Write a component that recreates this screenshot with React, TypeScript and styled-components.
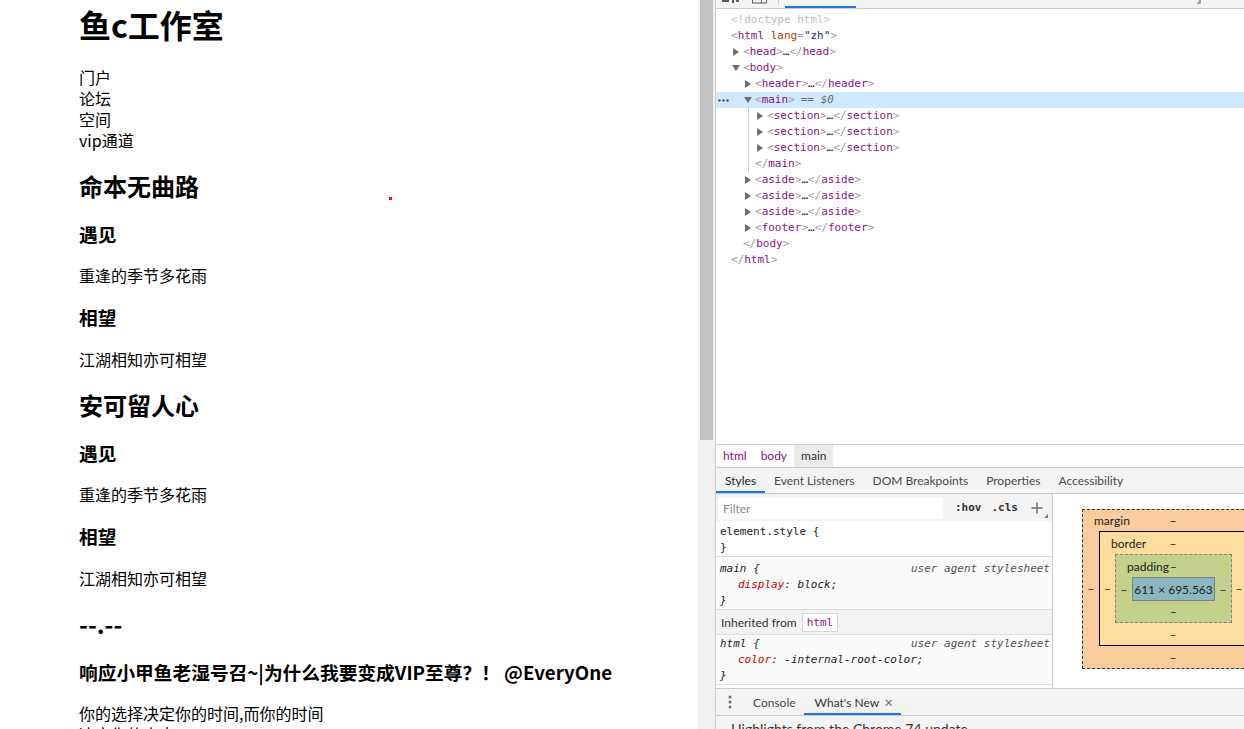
import React from "react";
import styled, { createGlobalStyle, css } from "styled-components";

const CJK = `"Noto Sans CJK SC", "Microsoft YaHei", sans-serif`;
const UI = `Lato, "Noto Sans", sans-serif`;
const MONO = `"DejaVu Sans Mono", "Liberation Mono", monospace`;

const GlobalStyle = createGlobalStyle`
  html, body { margin: 0; padding: 0; background: #fff; overflow: hidden; }
  #root { width: 1244px; height: 729px; }
`;

const Screen = styled.div`
  display: grid;
  grid-template-columns: 698px 17px 529px;
  height: 729px;
  overflow: hidden;
`;

/* ---------- left page ---------- */
const Page = styled.div`
  position: relative;
  overflow: hidden;
  padding-left: 79px;
  font-family: ${CJK};
  color: #000;
`;
const Title = styled.h1`
  font-size: 32px;
  font-weight: 700;
  line-height: 42px;
  margin: 3px 0 22.44px;
`;
const Nav = styled.nav`
  display: flex;
  flex-direction: column;
  margin-bottom: -1px;
`;
const NavLink = styled.span`
  font-size: 16px;
  line-height: 21px;
`;
const SectionTitle = styled.h2`
  font-size: 24px;
  font-weight: 700;
  line-height: 31.68px;
  margin: 19.92px 0;
`;
const SubTitle = styled.h3`
  font-size: 18.72px;
  font-weight: 700;
  line-height: 24.71px;
  margin: 18.72px 0;
  white-space: nowrap;
`;
const Para = styled.p`
  font-size: 16px;
  line-height: 21px;
  margin: 16px 0;
`;
const CursorDot = styled.span`
  position: absolute;
  left: 389px;
  top: 197px;
  width: 3px;
  height: 3px;
  background: #f01414;
`;

/* ---------- scrollbar ---------- */
const ScrollTrack = styled.div`
  background: #f1f1f1;
  padding: 0 2px;
`;
const ScrollThumb = styled.div`
  height: 440px;
  background: #c1c1c1;
`;

/* ---------- devtools ---------- */
const DevTools = styled.div`
  border-left: 1px solid #ccc;
  display: flex;
  flex-direction: column;
  height: 729px;
  overflow: hidden;
  background: #fff;
`;
const TopBar = styled.div`
  flex: none;
  height: 8px;
  background: #f3f3f3;
  border-bottom: 1px solid #ccc;
  display: flex;
  align-items: flex-start;
  padding-left: 6px;
  overflow: hidden;
`;
const TopStub = styled.svg<{ $gap: number }>`
  flex: none;
  margin-right: ${(p) => p.$gap}px;
`;
const TopSep = styled.span`
  flex: none;
  width: 1px;
  height: 5px;
  background: #ccc;
  margin-right: 6px;
`;
const TopActiveTab = styled.span`
  flex: none;
  width: 71px;
  height: 8px;
  box-shadow: inset 0 -2px 0 #1a73e8;
`;
const TopSpacer = styled.span`
  flex: 1;
`;

const Tree = styled.div`
  flex: none;
  height: 435px;
  padding-top: 3px;
  box-sizing: border-box;
  font: 11px ${MONO};
  overflow: hidden;
`;
const Row = styled.div<{ $level: number; $selected?: boolean; $guide?: boolean }>`
  position: relative;
  height: 16px;
  line-height: 16px;
  display: flex;
  align-items: center;
  white-space: nowrap;
  padding-left: ${(p) => 6 + p.$level * 12}px;
  background-color: ${(p) => (p.$selected ? "#cfe8fc" : "transparent")};
  ${(p) =>
    p.$guide &&
    css`
      background-image: linear-gradient(#c6d2e6, #c6d2e6);
      background-repeat: no-repeat;
      background-size: 1px 100%;
      background-position: 32px 0;
    `}
`;
const Arrow = styled.span<{ $dir?: "right" | "down" }>`
  flex: none;
  width: 9px;
  height: 16px;
  display: flex;
  align-items: center;
  &::before {
    content: "";
    ${(p) =>
      p.$dir === "right" &&
      css`
        margin-left: -1px;
        border-left: 6px solid #6e6e6e;
        border-top: 4px solid transparent;
        border-bottom: 4px solid transparent;
      `}
    ${(p) =>
      p.$dir === "down" &&
      css`
        margin-left: -2px;
        border-top: 6px solid #6e6e6e;
        border-left: 4px solid transparent;
        border-right: 4px solid transparent;
      `}
  }
`;
const SelDots = styled.svg`
  position: absolute;
  left: 2px;
  top: 7px;
`;
const Br = styled.span`
  color: #a894a6;
`;
const TagName = styled.span`
  color: #881280;
`;
const AttrName = styled.span`
  color: #994500;
`;
const AttrValue = styled.span`
  color: #1a1aa6;
`;
const Plain = styled.span`
  color: #222;
`;
const Doctype = styled.span`
  color: #c0c0c0;
`;
const DollarNote = styled.span`
  color: #6d6d6d;
  margin-left: 6px;
  & > i {
    font-style: italic;
  }
`;

const Crumbs = styled.div`
  flex: none;
  height: 22px;
  border-top: 1px solid #ccc;
  border-bottom: 1px solid #ccc;
  display: flex;
  font: 12px ${UI};
`;
const Crumb = styled.span<{ $active?: boolean }>`
  padding: 0 7px;
  line-height: 22px;
  color: ${(p) => (p.$active ? "#333" : "#881280")};
  background: ${(p) => (p.$active ? "#eaeaea" : "transparent")};
`;

const TabBar = styled.div`
  flex: none;
  height: 25px;
  background: #f3f3f3;
  border-bottom: 1px solid #ccc;
  display: flex;
  font: 12px ${UI};
`;
const Tab = styled.div<{ $active?: boolean }>`
  padding: 0 9px;
  line-height: 26px;
  color: ${(p) => (p.$active ? "#222" : "#4a4a4a")};
  box-shadow: ${(p) => (p.$active ? "inset 0 -2px 0 #1a73e8" : "none")};
  white-space: nowrap;
`;

const Panes = styled.div`
  flex: none;
  height: 194px;
  display: flex;
  overflow: hidden;
`;
const StylesPane = styled.div`
  flex: none;
  width: 336px;
  border-right: 1px solid #ccc;
  display: flex;
  flex-direction: column;
  overflow: hidden;
`;
const FilterBar = styled.div`
  flex: none;
  height: 27px;
  background: #f3f3f3;
  display: flex;
  align-items: center;
  padding-left: 2px;
  position: relative;
`;
const FilterInput = styled.div`
  flex: none;
  width: 220px;
  height: 21px;
  margin-top: 2px;
  background: #fff;
  padding-left: 5px;
  font: 12px ${UI};
  line-height: 21px;
  color: #8a8a8a;
`;
const Toggle = styled.span<{ $gap: number }>`
  margin-left: ${(p) => p.$gap}px;
  font: bold 11px ${MONO};
  color: #333;
`;
const PlusIcon = styled.svg`
  margin-left: 13px;
`;
const ResizeCorner = styled.span`
  position: absolute;
  right: 4px;
  bottom: 3px;
  border-left: 4px solid transparent;
  border-bottom: 4px solid #777;
`;
const Rule = styled.div<{ $ua?: boolean; $top: number }>`
  flex: none;
  padding: ${(p) => p.$top}px 2px 0 4px;
  border-bottom: 1px solid #ddd;
  background: ${(p) => (p.$ua ? "#fafafa" : "#fff")};
  font: 11px ${MONO};
  line-height: 16px;
  color: #222;
  font-style: ${(p) => (p.$ua ? "italic" : "normal")};
`;
const RuleHead = styled.div`
  display: flex;
  justify-content: space-between;
  white-space: nowrap;
`;
const Origin = styled.span`
  color: #545454;
`;
const Decl = styled.div`
  padding-left: 18px;
  white-space: nowrap;
`;
const PropName = styled.span`
  color: #c80000;
`;
const InheritedBar = styled.div`
  flex: none;
  height: 24px;
  background: #f3f3f3;
  border-bottom: 1px solid #ddd;
  display: flex;
  align-items: center;
  padding-left: 5px;
  font: 12px ${UI};
  color: #333;
`;
const InheritChip = styled.span`
  margin-left: 5px;
  padding: 0 4px;
  height: 17px;
  border: 1px solid #d6d6d6;
  background: #fff;
  font: 11px ${MONO};
  line-height: 17px;
  color: #881280;
`;

const BoxPane = styled.div`
  flex: 1;
  overflow: hidden;
  padding: 15px 0 0 29px;
  background: #fff;
  font: 12px ${UI};
  color: #222;
  display: flex;
  align-items: flex-start;
`;
const Layer = styled.div<{ $bg: string; $border: string; $cols: string; $rows: string }>`
  flex: none;
  display: grid;
  grid-template-columns: ${(p) => p.$cols};
  grid-template-rows: ${(p) => p.$rows};
  background: ${(p) => p.$bg};
  border: ${(p) => p.$border};
`;
const LayerTop = styled.div`
  grid-column: 1 / -1;
  display: grid;
  grid-template-columns: minmax(0, 1fr) auto minmax(0, 1fr);
  align-items: center;
  white-space: nowrap;
`;
const LayerLabel = styled.span`
  padding-left: 11px;
`;
const Dash = styled.span`
  display: flex;
  align-items: center;
  justify-content: center;
`;
const LayerBottom = styled(Dash)`
  grid-column: 1 / -1;
`;
const ContentBox = styled.div`
  background: #8cb6c0;
  border: 1px solid #808080;
  display: flex;
  align-items: center;
  justify-content: center;
  white-space: nowrap;
`;

const Drawer = styled.div`
  flex: none;
  border-top: 1px solid #ccc;
  background: #f3f3f3;
`;
const DrawerTabs = styled.div`
  height: 26px;
  border-bottom: 1px solid #ccc;
  display: flex;
  font: 12px ${UI};
`;
const MenuButton = styled.span`
  width: 27px;
  display: flex;
  align-items: center;
  justify-content: center;
`;
const DrawerTab = styled.span<{ $active?: boolean }>`
  display: flex;
  align-items: center;
  height: 26px;
  padding: 0 8px 0 ${(p) => (p.$active ? 11 : 10)}px;
  color: ${(p) => (p.$active ? "#333" : "#4a4a4a")};
  box-shadow: ${(p) => (p.$active ? "inset 0 -2px 0 #1a73e8" : "none")};
  white-space: nowrap;
`;
const CloseX = styled.span`
  margin-left: 5px;
  font-size: 15px;
  line-height: 1;
  color: #6e6e6e;
`;
const DrawerBody = styled.div`
  padding: 4px 15px 0;
  font: 14px ${UI};
  line-height: 18px;
  color: #333;
  white-space: nowrap;
`;

/* ---------- helpers ---------- */
const Open = ({ name }: { name: string }) => (
  <>
    <Br>&lt;</Br>
    <TagName>{name}</TagName>
    <Br>&gt;</Br>
  </>
);
const Close = ({ name }: { name: string }) => (
  <>
    <Br>&lt;/</Br>
    <TagName>{name}</TagName>
    <Br>&gt;</Br>
  </>
);
const Collapsed = ({ name }: { name: string }) => (
  <>
    <Open name={name} />
    <Plain>…</Plain>
    <Close name={name} />
  </>
);

const Dots = () => (
  <svg width="4" height="14" viewBox="0 0 4 14">
    <circle cx="2" cy="2" r="1.5" fill="#6e6e6e" />
    <circle cx="2" cy="7" r="1.5" fill="#6e6e6e" />
    <circle cx="2" cy="12" r="1.5" fill="#6e6e6e" />
  </svg>
);

export default function App() {
  return (
    <>
      <GlobalStyle />
      <Screen>
        <Page>
          <header>
            <Title>鱼c工作室</Title>
            <Nav>
              <NavLink>门户</NavLink>
              <NavLink>论坛</NavLink>
              <NavLink>空间</NavLink>
              <NavLink>vip通道</NavLink>
            </Nav>
          </header>
          <main>
            <section>
              <SectionTitle>命本无曲路</SectionTitle>
              <SubTitle>遇见</SubTitle>
              <Para>重逢的季节多花雨</Para>
              <SubTitle>相望</SubTitle>
              <Para>江湖相知亦可相望</Para>
            </section>
            <section>
              <SectionTitle>安可留人心</SectionTitle>
              <SubTitle>遇见</SubTitle>
              <Para>重逢的季节多花雨</Para>
              <SubTitle>相望</SubTitle>
              <Para>江湖相知亦可相望</Para>
            </section>
            <section>
              <SectionTitle>--.--</SectionTitle>
              <SubTitle>响应小甲鱼老湿号召~|为什么我要变成VIP至尊？！ @EveryOne</SubTitle>
              <Para>
                你的选择决定你的时间,而你的时间
                <br />
                决定你的未来
              </Para>
            </section>
          </main>
          <CursorDot />
        </Page>

        <ScrollTrack>
          <ScrollThumb />
        </ScrollTrack>

        <DevTools>
          <TopBar>
            <TopStub $gap={12} width="18" height="4" viewBox="0 0 18 4">
              <rect x="0" y="0" width="7" height="2" fill="#5f5f5f" />
              <rect x="10" y="0" width="2" height="3" fill="#5f5f5f" />
              <rect x="14" y="0" width="3" height="2" fill="#5f5f5f" />
            </TopStub>
            <TopStub $gap={11} width="15" height="4" viewBox="0 0 15 4">
              <rect x="0.5" y="-2" width="14" height="5" fill="none" stroke="#5f5f5f" />
              <rect x="9" y="0" width="1" height="3" fill="#5f5f5f" />
            </TopStub>
            <TopSep />
            <TopActiveTab />
            <TopSpacer />
            <TopStub $gap={42} width="6" height="4" viewBox="0 0 6 4">
              <path d="M1 3 H4 V0" fill="none" stroke="#5f5f5f" strokeWidth="1.2" />
            </TopStub>
          </TopBar>

          <Tree>
            <Row $level={0}>
              <Arrow />
              <Doctype>&lt;!doctype html&gt;</Doctype>
            </Row>
            <Row $level={0}>
              <Arrow />
              <Br>&lt;</Br>
              <TagName>html</TagName>&nbsp;
              <AttrName>lang</AttrName>
              <Br>=</Br>
              <AttrValue>"zh"</AttrValue>
              <Br>&gt;</Br>
            </Row>
            <Row $level={1}>
              <Arrow $dir="right" />
              <Collapsed name="head" />
            </Row>
            <Row $level={1}>
              <Arrow $dir="down" />
              <Open name="body" />
            </Row>
            <Row $level={2}>
              <Arrow $dir="right" />
              <Collapsed name="header" />
            </Row>
            <Row $level={2} $selected>
              <SelDots width="11" height="3" viewBox="0 0 11 3">
                <circle cx="1.5" cy="1.5" r="1.2" fill="#555" />
                <circle cx="5.5" cy="1.5" r="1.2" fill="#555" />
                <circle cx="9.5" cy="1.5" r="1.2" fill="#555" />
              </SelDots>
              <Arrow $dir="down" />
              <Open name="main" />
              <DollarNote>
                == <i>$0</i>
              </DollarNote>
            </Row>
            <Row $level={3} $guide>
              <Arrow $dir="right" />
              <Collapsed name="section" />
            </Row>
            <Row $level={3} $guide>
              <Arrow $dir="right" />
              <Collapsed name="section" />
            </Row>
            <Row $level={3} $guide>
              <Arrow $dir="right" />
              <Collapsed name="section" />
            </Row>
            <Row $level={2} $guide>
              <Arrow />
              <Close name="main" />
            </Row>
            <Row $level={2}>
              <Arrow $dir="right" />
              <Collapsed name="aside" />
            </Row>
            <Row $level={2}>
              <Arrow $dir="right" />
              <Collapsed name="aside" />
            </Row>
            <Row $level={2}>
              <Arrow $dir="right" />
              <Collapsed name="aside" />
            </Row>
            <Row $level={2}>
              <Arrow $dir="right" />
              <Collapsed name="footer" />
            </Row>
            <Row $level={1}>
              <Arrow />
              <Close name="body" />
            </Row>
            <Row $level={0}>
              <Arrow />
              <Close name="html" />
            </Row>
          </Tree>

          <Crumbs>
            <Crumb>html</Crumb>
            <Crumb>body</Crumb>
            <Crumb $active>main</Crumb>
          </Crumbs>

          <TabBar>
            <Tab $active>Styles</Tab>
            <Tab>Event Listeners</Tab>
            <Tab>DOM Breakpoints</Tab>
            <Tab>Properties</Tab>
            <Tab>Accessibility</Tab>
          </TabBar>

          <Panes>
            <StylesPane>
              <FilterBar>
                <FilterInput>Filter</FilterInput>
                <Toggle $gap={12}>:hov</Toggle>
                <Toggle $gap={10}>.cls</Toggle>
                <PlusIcon width="12" height="12" viewBox="0 0 12 12">
                  <path d="M6 0.5 V11.5 M0.5 6 H11.5" stroke="#6e6e6e" strokeWidth="1.4" />
                </PlusIcon>
                <ResizeCorner />
              </FilterBar>
              <Rule $top={3}>
                <RuleHead>
                  <span>element.style {"{"}</span>
                </RuleHead>
                <div>{"}"}</div>
              </Rule>
              <Rule $ua $top={4}>
                <RuleHead>
                  <span>main {"{"}</span>
                  <Origin>user agent stylesheet</Origin>
                </RuleHead>
                <Decl>
                  <PropName>display</PropName>: block;
                </Decl>
                <div>{"}"}</div>
              </Rule>
              <InheritedBar>
                Inherited from
                <InheritChip>html</InheritChip>
              </InheritedBar>
              <Rule $ua $top={1}>
                <RuleHead>
                  <span>html {"{"}</span>
                  <Origin>user agent stylesheet</Origin>
                </RuleHead>
                <Decl>
                  <PropName>color</PropName>: -internal-root-color;
                </Decl>
                <div>{"}"}</div>
              </Rule>
            </StylesPane>

            <BoxPane>
              <Layer $bg="#f9cc9d" $border="1px dashed #333" $cols="16px 148px 16px" $rows="21px 115px 22px">
                <LayerTop>
                  <LayerLabel>margin</LayerLabel>
                  <Dash>–</Dash>
                  <span />
                </LayerTop>
                <Dash>–</Dash>
                <Layer $bg="#fcdd9d" $border="1px solid #000" $cols="15px 117px 14px" $rows="22px 69px 22px">
                  <LayerTop>
                    <LayerLabel>border</LayerLabel>
                    <Dash>–</Dash>
                    <span />
                  </LayerTop>
                  <Dash>–</Dash>
                  <Layer $bg="#c3d08b" $border="1px dashed #808080" $cols="16px 83px 16px" $rows="22px 24px 21px">
                    <LayerTop>
                      <LayerLabel>padding</LayerLabel>
                      <Dash>–</Dash>
                      <span />
                    </LayerTop>
                    <Dash>–</Dash>
                    <ContentBox>611 × 695.563</ContentBox>
                    <Dash>–</Dash>
                    <LayerBottom>–</LayerBottom>
                  </Layer>
                  <Dash>–</Dash>
                  <LayerBottom>–</LayerBottom>
                </Layer>
                <Dash>–</Dash>
                <LayerBottom>–</LayerBottom>
              </Layer>
            </BoxPane>
          </Panes>

          <Drawer>
            <DrawerTabs>
              <MenuButton>
                <Dots />
              </MenuButton>
              <DrawerTab>Console</DrawerTab>
              <DrawerTab $active>
                What's New<CloseX>×</CloseX>
              </DrawerTab>
            </DrawerTabs>
            <DrawerBody>Highlights from the Chrome 74 update</DrawerBody>
          </Drawer>
        </DevTools>
      </Screen>
    </>
  );
}
